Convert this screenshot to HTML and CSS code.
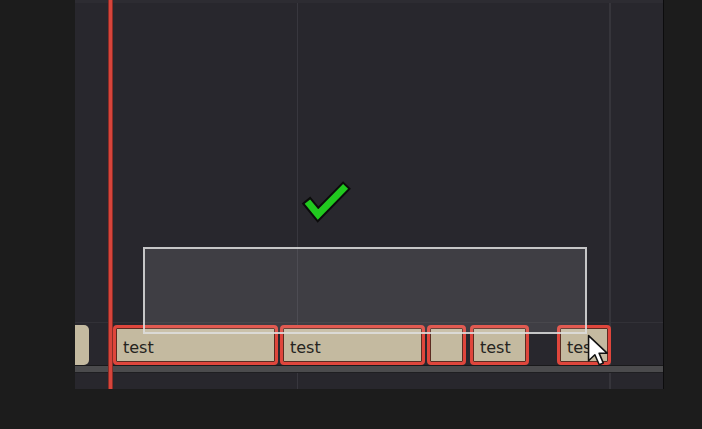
FILE: index.html
```html
<!DOCTYPE html>
<html lang="en">
<head>
    <meta charset="UTF-8">
    <meta name="viewport" content="width=device-width, initial-scale=1.0">
    <title>Timeline</title>
    <link rel="stylesheet" href="styles.css">
</head>
<body>
    <div class="timeline">
        <div class="grid-line grid-a"></div>
        <div class="grid-line grid-b"></div>

        <div class="top-edge"></div>
        <div class="lane"></div>

        <div class="track">
            <div class="clip clip-cut"></div>
            <div class="clip selected w1">test</div>
            <div class="clip selected w2">test</div>
            <div class="clip selected w3"></div>
            <div class="clip selected w4">test</div>
            <div class="clip selected w5">test</div>
        </div>

        <div class="scrollbar"></div>
        <div class="footer"></div>

        <!-- overlays -->
        <div class="playhead"></div>
        <div class="marquee"></div>

        <svg class="check" width="60" height="52" viewBox="0 0 60 52">
            <polyline points="10,24 22,38.5 51,9" fill="none" stroke="#0b0b0b" stroke-width="11" stroke-linejoin="miter"/>
            <polyline points="11.4,25.6 22,38.5 49.6,10.4" fill="none" stroke="#21c91f" stroke-width="7" stroke-linejoin="miter"/>
        </svg>

        <svg class="cursor" width="22" height="33" viewBox="0 0 14 21">
            <path d="M1 1 L1 17 L5 13.2 L7.8 19.6 L10.4 18.5 L7.7 12.2 L12.8 12.2 Z" fill="#fff" stroke="#111" stroke-width="1" stroke-linejoin="round"/>
        </svg>
    </div>
</body>
</html>
```

FILE: styles.css
```css
html, body {
    margin: 0;
    padding: 0;
}
body {
    background-color: #1c1c1c;
    width: 702px;
    height: 429px;
    overflow: hidden;
    font-family: 'DejaVu Sans', sans-serif;
}
.timeline {
    position: relative;
    margin-left: 75px;
    width: 588px;
    height: 389px;
    background-color: #28272d;
    border-right: 1px solid #0c0c0d;
    display: flex;
    flex-direction: column;
}
.top-edge {
    height: 3px;
    background-color: #2d2c32;
    position: relative;
    z-index: 1;
}
.lane {
    height: 319px;
}
.track {
    height: 42px;
    border-top: 1px solid #323137;
    display: flex;
    align-items: flex-end;
}
.clip {
    position: relative;
    z-index: 1;
    box-sizing: border-box;
    height: 40px;
    background-color: #c4baa0;
    border-radius: 4px;
    color: #252420;
    font-size: 16px;
    line-height: 18px;
    white-space: nowrap;
    overflow: hidden;
}
.clip-cut {
    width: 14px;
    border-radius: 0 5px 5px 0;
    margin-right: 24px;
}
.selected {
    border: 3px solid #df463c;
    box-shadow: inset 0 0 0 1px #5c2c22;
    padding: 11px 0 0 7px;
    margin-right: 2px;
}
.w1 { width: 165px; }
.w2 { width: 145px; }
.w3 { width: 39px; margin-right: 4px; }
.w4 { width: 59px; margin-right: 28px; }
.w5 { width: 54px; }
.scrollbar {
    position: relative;
    z-index: 1;
    height: 6px;
    background-color: #4b4b4d;
    border-top: 1px solid #19191b;
    border-bottom: 1px solid #1f1f22;
}
.footer {
    flex: 1;
}
.grid-line {
    position: absolute;
    top: 0;
    bottom: 0;
}
.grid-a {
    left: 222px;
    width: 1px;
    background-color: #38373e;
}
.grid-b {
    left: 534px;
    width: 2px;
    background-color: #36353b;
}
.playhead {
    position: absolute;
    z-index: 2;
    top: 0;
    bottom: 0;
    left: 33px;
    width: 3px;
    background-color: #d6443b;
    border-left: 1px solid #8a2d26;
    border-right: 1px solid #8a2d26;
}
.marquee {
    position: absolute;
    z-index: 3;
    left: 68px;
    top: 247px;
    width: 444px;
    height: 87px;
    box-sizing: border-box;
    border: 2px solid rgba(222, 222, 222, 0.85);
    background-color: rgba(255, 255, 255, 0.11);
}
.check {
    position: absolute;
    z-index: 4;
    left: 221px;
    top: 176px;
}
.cursor {
    position: absolute;
    z-index: 5;
    left: 512px;
    top: 334px;
}
```
